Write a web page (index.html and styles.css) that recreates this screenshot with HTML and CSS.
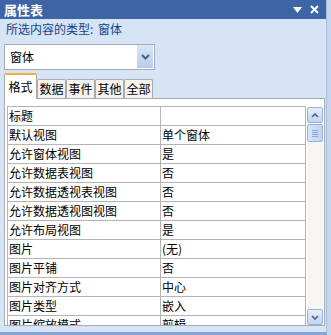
FILE: index.html
```html
<!DOCTYPE html>
<html lang="zh-CN">
<head>
  <meta charset="UTF-8" />
  <title>属性表</title>
  <link rel="stylesheet" href="styles.css">
</head>
<body>
  <div class="panel">
    <div class="titlebar">
      <span class="title">属性表</span>
      <span class="title-btns">
        <svg width="9" height="6" viewBox="0 0 9 6"><path d="M0 0h9L4.5 6z" fill="#fff"/></svg>
        <svg width="9" height="9" viewBox="0 0 9 9"><path d="M1 1l7 7M8 1L1 8" stroke="#fff" stroke-width="2"/></svg>
      </span>
    </div>

    <div class="selection-type">所选内容的类型: <span class="type-name">窗体</span></div>

    <div class="combo">
      <span class="combo-text">窗体</span>
      <span class="combo-btn">
        <svg width="9" height="6" viewBox="0 0 9 6"><path d="M1 1l3.5 3.5L8 1" fill="none" stroke="#4b5f83" stroke-width="2"/></svg>
      </span>
    </div>

    <div class="tabs">
      <div class="tab active">格式</div>
      <div class="tab">数据</div>
      <div class="tab">事件</div>
      <div class="tab">其他</div>
      <div class="tab">全部</div>
    </div>

    <div class="sheet">
      <div class="grid">
        <div class="row"><div class="name">标题</div><div class="value"></div></div>
        <div class="row"><div class="name">默认视图</div><div class="value">单个窗体</div></div>
        <div class="row"><div class="name">允许窗体视图</div><div class="value">是</div></div>
        <div class="row"><div class="name">允许数据表视图</div><div class="value">否</div></div>
        <div class="row"><div class="name">允许数据透视表视图</div><div class="value">否</div></div>
        <div class="row"><div class="name">允许数据透视图视图</div><div class="value">否</div></div>
        <div class="row"><div class="name">允许布局视图</div><div class="value">是</div></div>
        <div class="row"><div class="name">图片</div><div class="value">(无)</div></div>
        <div class="row"><div class="name">图片平铺</div><div class="value">否</div></div>
        <div class="row"><div class="name">图片对齐方式</div><div class="value">中心</div></div>
        <div class="row"><div class="name">图片类型</div><div class="value">嵌入</div></div>
        <div class="row"><div class="name">图片缩放模式</div><div class="value">剪辑</div></div>
      </div>
      <div class="scrollbar">
        <div class="sb-btn">
          <svg width="8" height="5" viewBox="0 0 8 5"><path d="M1 4l3-3 3 3" fill="none" stroke="#4b5f83" stroke-width="1.6"/></svg>
        </div>
        <div class="sb-thumb">
          <span></span><span></span><span></span><span></span>
        </div>
        <div class="sb-track"></div>
        <div class="sb-btn">
          <svg width="8" height="5" viewBox="0 0 8 5"><path d="M1 1l3 3 3-3" fill="none" stroke="#4b5f83" stroke-width="1.6"/></svg>
        </div>
      </div>
    </div>
  </div>
</body>
</html>
```

FILE: styles.css
```css
:root {
  --title: #3d64a5;
  --panel: #d6e4f5;
  --frame: #c6d6ec;
  --label: #15428b;
  --border: #a5acb5;
  --line: #b4b4b4;
  --tab: #f4f3ee;
  --orange: #f0b23e;
  --arrow: #4b5f83;
}

body {
  margin: 0;
  width: 331px;
  height: 335px;
  overflow: hidden;
  background: var(--frame);
  font-family: "Noto Sans CJK SC", sans-serif;
  font-size: 12px;
  color: #000;
}

.panel {
  width: 327px;
  height: 335px;
  box-sizing: border-box;
  background: var(--panel);
  border-right: 1px solid #a9bedf;
  border-bottom: 3px solid #86a5d6;
  display: flex;
  flex-direction: column;
}

.titlebar {
  height: 19px;
  flex: none;
  background: var(--title);
  display: flex;
  align-items: center;
  justify-content: space-between;
  padding: 0 4px;
}

.title {
  color: #fff;
  font-weight: bold;
  font-size: 13px;
  line-height: 19px;
}

.title-btns {
  display: flex;
  align-items: center;
  gap: 8px;
  padding-right: 3px;
}

.selection-type {
  margin-top: 2px;
  padding-left: 6px;
  line-height: 16px;
  height: 16px;
  color: var(--label);
}

.type-name {
  margin-left: 2px;
}

.combo {
  margin: 7px 0 0 4px;
  width: 151px;
  height: 26px;
  flex: none;
  box-sizing: border-box;
  border: 1px solid var(--border);
  background: #fff;
  display: flex;
  justify-content: space-between;
}

.combo-text {
  padding-left: 5px;
  line-height: 24px;
}

.combo-btn {
  width: 16px;
  margin: 0 1px 1px 0;
  background: linear-gradient(#dbe6f7, #b8ccee);
  display: flex;
  align-items: center;
  justify-content: center;
}

.tabs {
  margin: 3px 0 -1px 4px;
  height: 26px;
  flex: none;
  display: flex;
  align-items: flex-end;
  position: relative;
  z-index: 1;
}

.tab {
  height: 19px;
  width: 29px;
  box-sizing: border-box;
  border: 1px solid #a7abb0;
  border-bottom: none;
  border-radius: 2px 2px 0 0;
  background: var(--tab);
  line-height: 18px;
  text-align: center;
  margin-bottom: 1px;
}

.tab.active {
  width: 33px;
  height: 26px;
  margin-bottom: 0;
  border-top: 2px solid var(--orange);
  background: #fff;
  line-height: 24px;
}

.sheet {
  flex: 1;
  margin: 0 1px 6px 4px;
  border: 1px solid var(--border);
  background: #fff;
  padding: 7px 1px 0 2px;
  display: flex;
  gap: 1px;
  overflow: hidden;
  min-height: 0;
}

.grid {
  width: 300px;
  box-sizing: border-box;
  border: 1px solid var(--line);
  border-bottom: none;
  overflow: hidden;
}

.row {
  display: grid;
  grid-template-columns: 153px 1fr;
  height: 19px;
  box-sizing: border-box;
  border-bottom: 1px solid var(--line);
}

.name {
  border-right: 1px solid var(--line);
  padding-left: 1px;
  line-height: 18px;
  white-space: nowrap;
}

.value {
  padding-left: 1px;
  line-height: 18px;
  white-space: nowrap;
}

.scrollbar {
  width: 16px;
  padding-top: 1px;
  display: flex;
  flex-direction: column;
}

.sb-btn {
  height: 16px;
  flex: none;
  box-sizing: border-box;
  border: 1px solid #98b1dc;
  border-radius: 2px;
  background: linear-gradient(#e6eefb, #c3d4f0);
  display: flex;
  align-items: center;
  justify-content: center;
}

.sb-thumb {
  height: 18px;
  margin-top: 1px;
  flex: none;
  box-sizing: border-box;
  border: 1px solid #98b1dc;
  border-radius: 2px;
  background: linear-gradient(90deg, #d8e4f8, #c1d3f1);
  display: flex;
  flex-direction: column;
  align-items: center;
  justify-content: center;
  gap: 1px;
}

.sb-thumb span {
  width: 6px;
  height: 1px;
  background: #8ea7d4;
}

.sb-track {
  flex: 1;
  background: #f6f5f1;
}
```
